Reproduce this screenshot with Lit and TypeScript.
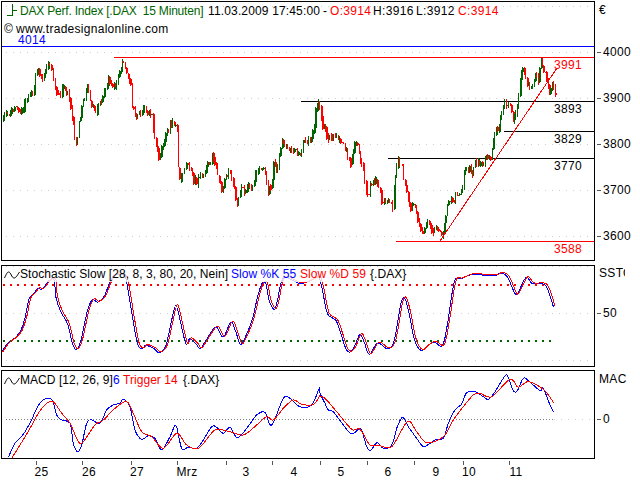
import { LitElement, html, svg, css } from "lit";
import { customElement } from "lit/decorators.js";

type P = [number, number];

// price course of the main panel (x, y in page pixels)
const PRICE: P[] = [
  [2,122],[5,112],[10,112],[15,108],[20,115],[25,102],[30,92],[33,97],[36,68],[42,78],[47,65],[52,68],[55,87],[58,98],[62,88],[68,93],[70,110],[73,125],[75,143],[77,145],[78,123],[82,107],[87,85],[90,103],[95,110],[100,103],[103,95],[108,78],[113,88],[118,78],[123,59],[127,80],[130,79],
  [131,95],[132,107],[135,117],[143,110],[152,115],[153,133],[158,157],[163,143],[167,133],[170,125],[175,123],[177,135],[178,167],[180,180],[183,167],[188,163],[193,180],[197,183],[200,173],[205,172],[208,162],[213,157],[217,173],[222,192],[223,185],[227,173],[230,172],[233,187],[237,203],[240,188],[245,193],[247,182],[252,188],[255,170],[260,168],[263,165],[267,185],[268,193],[272,179],[273,163],[277,172],[278,157],[282,140],[287,147],[295,150],[300,157],[303,137],[310,143],[313,132],[315,112],[318,101],
  [322,125],[327,137],[337,138],[345,148],[350,163],[355,145],[358,150],[363,173],[365,190],[368,195],[370,182],[375,180],[378,185],[382,203],[388,202],[392,208],[395,175],[397,160],[402,167],[405,188],[410,208],[415,205],[418,223],[422,237],[426,220],[432,230],[437,230],[442,235],[445,220],[448,198],[452,203],[457,193],[462,193],[463,173],[467,167],[472,173],[475,160],[480,167],[487,157],[490,163],[492,147],[495,130],[497,128],[502,115],[504,100],[505,107],[510,108],[513,125],[517,107],[519,87],[521,68],[525,80],[530,87],[535,77],[538,78],[540,57],[543,70],[547,82],[550,95],[552,82],[554,92],[556,93],
];

const toPage = (ox: number, oy: number, a: number[][]): P[] =>
  a.map(([x, y]) => [ox + x / 3, oy + y / 3] as P);

const STOCH: P[] = [
  ...toPage(0, 260, [[5,278],[25,250],[50,230],[65,210],[78,170],[90,115],[105,98],[115,85],[130,85],[150,60],[165,60],[170,110],[185,155],[205,190],[220,250],[232,267],[245,240],[265,150],[280,118],[295,125],[315,108],[330,70],[345,45],[375,45],[385,80],[400,170],[415,250],[428,265],[440,255],[465,265],[480,277],[500,255],[515,190],[530,135],[545,190],[560,250],[572,235],[590,250],[603,265],[620,240],[650,200],[672,230],[695,185],[710,215],[725,252],[745,215],[760,175],[775,110],[788,70],[800,70],[810,120],[825,147],[835,120],[845,70],[860,50],[905,70],[955,50]]),
  ...toPage(320, 260, [[0,50],[10,90],[25,160],[50,180],[65,220],[80,265],[92,275],[105,260],[122,222],[135,245],[150,282],[175,248],[205,265],[225,240],[245,130],[257,115],[270,160],[285,235],[305,270],[325,255],[345,245],[370,255],[385,190],[405,65],[425,55],[460,42],[500,45],[530,45],[545,38],[565,50],[585,95],[595,100],[620,52],[640,70],[670,70],[685,85],[703,140]]),
];

const MACD_BLUE: P[] = [
  ...toPage(0, 370, [[25,262],[45,220],[60,205],[75,185],[95,150],[110,115],[130,90],[155,88],[170,135],[185,150],[210,160],[220,220],[232,245],[245,225],[260,160],[275,150],[300,160],[320,120],[340,105],[360,100],[370,88],[390,110],[405,180],[425,208],[445,197],[465,205],[485,240],[510,200],[528,167],[545,235],[565,232],[590,235],[610,210],[635,170],[650,172],[670,190],[690,172],[712,203],[740,175],[770,135],[795,127],[815,165],[850,85],[870,85],[900,110],[935,105],[958,55]]),
  ...toPage(320, 370, [[0,70],[15,100],[25,120],[40,125],[70,165],[95,192],[115,178],[125,180],[140,230],[152,240],[172,218],[190,235],[215,225],[232,170],[248,142],[265,170],[290,205],[310,230],[330,220],[345,210],[370,205],[385,160],[405,120],[425,102],[440,68],[465,65],[490,80],[505,88],[525,65],[555,18],[565,22],[580,62],[592,62],[610,25],[625,32],[660,62],[670,55],[690,105],[702,127]]),
];

const MACD_RED: P[] = [
  ...toPage(0, 370, [[35,265],[60,225],[90,175],[115,130],[140,100],[160,95],[185,130],[210,160],[235,215],[250,215],[285,165],[310,150],[345,115],[380,95],[400,130],[425,185],[455,200],[490,235],[530,190],[560,225],[595,235],[630,195],[650,178],[690,185],[730,195],[770,165],[800,140],[820,150],[850,115],[880,90],[905,103],[940,103],[958,80]]),
  ...toPage(320, 370, [[0,78],[15,85],[50,125],[95,178],[120,178],[150,225],[175,225],[215,230],[262,155],[290,185],[320,218],[370,200],[400,150],[430,110],[460,75],[480,70],[515,80],[570,28],[595,52],[625,35],[672,60],[702,100]]),
];

// Catmull-Rom through the points, so the curves read as rounded and not as polygons
function smooth(a: P[], dx = 0, dy = 0): string {
  const p = a.map(([x, y]) => [x + dx, y + dy] as P);
  let d = `M${p[0][0].toFixed(1)} ${p[0][1].toFixed(1)}`;
  for (let i = 0; i < p.length - 1; i++) {
    const p0 = p[Math.max(i - 1, 0)];
    const p1 = p[i];
    const p2 = p[i + 1];
    const p3 = p[Math.min(i + 2, p.length - 1)];
    const c1x = p1[0] + (p2[0] - p0[0]) / 6;
    const c1y = p1[1] + (p2[1] - p0[1]) / 6;
    const c2x = p2[0] - (p3[0] - p1[0]) / 6;
    const c2y = p2[1] - (p3[1] - p1[1]) / 6;
    d += `C${c1x.toFixed(1)} ${c1y.toFixed(1)} ${c2x.toFixed(1)} ${c2y.toFixed(1)} ${p2[0].toFixed(1)} ${p2[1].toFixed(1)}`;
  }
  return d;
}

function priceAt(x: number): number {
  for (let i = 1; i < PRICE.length; i++) {
    const [x0, y0] = PRICE[i - 1];
    const [x1, y1] = PRICE[i];
    if (x <= x1) return y0 + ((y1 - y0) * (x - x0)) / (x1 - x0 || 1);
  }
  return PRICE[PRICE.length - 1][1];
}

interface Bar { x: number; top: number; bottom: number; up: boolean; wide: boolean }

function buildBars(): Bar[] {
  let s = 12345;
  const rnd = () => {
    s = (s * 1664525 + 1013904223) >>> 0;
    return s / 4294967296;
  };
  const out: Bar[] = [];
  let prev = priceAt(2);
  for (let x = 3; x <= 556; x += 1.4) {
    const target = priceAt(x);
    const close = target + (rnd() - 0.5) * 7;
    const wick = rnd() * 3.5;
    out.push({
      x: Math.round(x),
      top: Math.max(Math.min(prev, close) - wick, 57),
      bottom: Math.min(Math.max(prev, close) + wick, 241),
      up: close < prev,
      wide: rnd() > 0.5,
    });
    prev = close;
  }
  return out;
}

const BARS = buildBars();
const MAIN_GRID = [6, 52, 98, 144, 190, 236];
const DAY_TICKS = [36, 82, 131, 177, 226, 272, 320, 367, 414, 463, 509];
const DAYS: [string, number][] = [
  ["25", 41.5], ["26", 89], ["27", 137], ["Mrz", 187], ["3", 246], ["4", 294],
  ["5", 341], ["6", 388], ["9", 436], ["10", 469], ["11", 516],
];

@customElement("app-root")
export class AppRoot extends LitElement {
  static styles = css`
    :host {
      display: block;
      width: 640px;
      height: 480px;
      background: #fff;
      overflow: hidden;
      font-family: "Liberation Sans", Arial, sans-serif;
    }
    .page {
      display: flex;
      flex-direction: column;
      padding: 1px 0 0 1px;
      width: 640px;
      height: 480px;
      box-sizing: border-box;
    }
    .row { display: flex; }
    .main { height: 260px; margin-bottom: 4px; }
    .stoch { height: 102px; margin-bottom: 3px; }
    .macd { height: 89px; }
    .plot {
      width: 594px;
      height: 100%;
      box-sizing: border-box;
      border: 1px solid #000;
      flex: none;
    }
    svg { display: block; }
    text { font: 12px "Liberation Sans", Arial, sans-serif; fill: #000; letter-spacing: 0.33px; }
    .tight { letter-spacing: -0.2px; white-space: pre; }
    .date { letter-spacing: 0.15px; }
    .url { letter-spacing: 0.28px; }
    .legend { letter-spacing: 0.05px; }
    .green { fill: #006400; }
    .red { fill: #ff0000; }
    .blue { fill: #0000ff; }
    .grid { stroke: #cfcfcf; stroke-width: 1; stroke-dasharray: 1 6; shape-rendering: crispEdges; }
    .hl { stroke-width: 1; shape-rendering: crispEdges; }
    .s-blue { stroke: #0000ff; }
    .s-red { stroke: #ff0000; }
    .s-black { stroke: #000; }
    .s-green { stroke: #006400; }
    .bar { stroke-width: 1; shape-rendering: crispEdges; }
    .curve { fill: none; stroke-width: 1; shape-rendering: crispEdges; }
    .trend { fill: none; stroke: #ff0000; stroke-width: 1; shape-rendering: crispEdges; }
    .dots { stroke-width: 2; stroke-dasharray: 2 5; shape-rendering: crispEdges; }
    .zero { stroke: #808080; stroke-width: 1; stroke-dasharray: 1 2; shape-rendering: crispEdges; }
    .veil { fill: #fff; fill-opacity: 0.82; }
    .icon { fill: none; stroke: #000; stroke-width: 1; }
    .icon-g { fill: none; stroke: #006400; stroke-width: 1; shape-rendering: crispEdges; }
    .tick { stroke: #555; stroke-width: 1; shape-rendering: crispEdges; }
    .xaxis { margin-left: -1px; }
  `;

  private tick(y: number, label: string) {
    return svg`
      <line class="tick" x1="597" x2="601" y1=${y + 0.5} y2=${y + 0.5}></line>
      <text x="603" y=${y + 4}>${label}</text>`;
  }

  private mainPlot() {
    return svg`
      <svg width="592" height="258" viewBox="2 2 592 258">
        ${MAIN_GRID.map((y) => svg`<line class="grid" x1="6" x2="590" y1=${y + 0.5} y2=${y + 0.5}></line>`)}
        <line class="hl s-blue" x1="2" x2="594" y1="46.5" y2="46.5"></line>
        <line class="hl s-red" x1="114" x2="594" y1="57.5" y2="57.5"></line>
        <line class="hl s-black" x1="301" x2="594" y1="101.5" y2="101.5"></line>
        <line class="hl s-black" x1="504" x2="594" y1="131.5" y2="131.5"></line>
        <line class="hl s-black" x1="388" x2="594" y1="158.5" y2="158.5"></line>
        <line class="hl s-red" x1="396" x2="594" y1="241.5" y2="241.5"></line>
        ${BARS.map((b) => svg`
          <line class="bar ${b.up ? "s-green" : "s-red"}" x1=${b.x + 0.5} x2=${b.x + 0.5} y1=${b.top} y2=${b.bottom}></line>
          ${b.wide ? svg`<line class="bar ${b.up ? "s-green" : "s-red"}" x1=${b.x + 1.5} x2=${b.x + 1.5} y1=${b.top + 1} y2=${b.bottom - 1}></line>` : ""}`)}
        <line class="trend" x1="440" y1="241" x2="557" y2="68"></line>
        <path class="icon-g" d="M12.5 4V16M7 15.5H12.5M12.5 10.5H17"></path>
        <text class="green tight" x="20" y="15">DAX Perf. Index [.DAX  15 Minuten]</text>
        <text class="date" x="208" y="15">11.03.2009 17:45:00</text>
        <text x="323" y="15">-</text>
        <text class="red" x="330" y="15">O:3914</text>
        <text x="373" y="15">H:3916</text>
        <text x="416" y="15">L:3912</text>
        <text class="red" x="458" y="15">C:3914</text>
        <text x="4" y="33">©</text>
        <text class="url" x="16" y="33">www.tradesignalonline.com</text>
        <text class="blue" x="18" y="43.5">4014</text>
        <text class="red" x="554" y="69">3991</text>
        <text x="554" y="113">3893</text>
        <text x="554" y="143">3829</text>
        <text x="554" y="170">3770</text>
        <text class="red" x="554" y="253">3588</text>
      </svg>`;
  }

  private stochPlot() {
    return svg`
      <svg width="592" height="100" viewBox="2 266 592 100">
        ${[266, 313, 360].map((y) => svg`<line class="grid" x1="6" x2="590" y1=${y + 0.5} y2=${y + 0.5}></line>`)}
        <line class="dots s-red" x1="3" x2="549" y1="285" y2="285"></line>
        <line class="dots s-green" x1="3" x2="552" y1="341" y2="341"></line>
        <path class="curve s-blue" d=${smooth(STOCH, -0.8, 0.4)}></path>
        <path class="curve s-red" d=${smooth(STOCH, 0.8, -0.4)}></path>
        <rect class="veil" x="4" y="268" width="402" height="14"></rect>
        <path class="icon" d="M4.5 278C6 275 7 272 8.5 272C11 272 11.5 278 14 278C16 278 17.5 275 19.5 272"></path>
        <text class="legend" x="20" y="278">Stochastic Slow [28, 8, 3, 80, 20, Nein]</text>
        <text class="blue legend" x="231" y="278">Slow %K 55</text>
        <text class="red legend" x="300" y="278">Slow %D 59</text>
        <text class="legend" x="370" y="278">{.DAX}</text>
      </svg>`;
  }

  private macdPlot() {
    return svg`
      <svg width="592" height="87" viewBox="2 371 592 87">
        <line class="zero" x1="6" x2="554" y1="419.5" y2="419.5"></line>
        <line class="grid" x1="554" x2="590" y1="419.5" y2="419.5"></line>
        <path class="curve s-blue" d=${smooth(MACD_BLUE)}></path>
        <path class="curve s-red" d=${smooth(MACD_RED)}></path>
        <path class="icon" d="M4.5 384C6 381 7 378 8.5 378C11 378 11.5 384 14 384C16 384 17.5 381 19.5 378"></path>
        <text class="legend" x="20" y="384">MACD [12, 26, 9]</text>
        <text class="blue" x="113" y="384">6</text>
        <text class="red legend" x="123" y="384">Trigger 14</text>
        <text class="legend" x="183" y="384">{.DAX}</text>
      </svg>`;
  }

  render() {
    return html`
      <div class="page">
        <div class="row main">
          <div class="plot">${this.mainPlot()}</div>
          <svg width="45" height="260" viewBox="595 1 45 260">
            <text x="599" y="14">€</text>
            ${this.tick(52, "4000")}
            ${this.tick(98, "3900")}
            ${this.tick(144, "3800")}
            ${this.tick(190, "3700")}
            ${this.tick(236, "3600")}
          </svg>
        </div>
        <div class="row stoch">
          <div class="plot">${this.stochPlot()}</div>
          <svg width="45" height="102" viewBox="595 265 45 102">
            <svg x="596" y="266" width="29" height="16"><text x="3" y="11">SSTOCH</text></svg>
            ${this.tick(313, "50")}
          </svg>
        </div>
        <div class="row macd">
          <div class="plot">${this.macdPlot()}</div>
          <svg width="45" height="89" viewBox="595 370 45 89">
            <svg x="596" y="372" width="31" height="16"><text x="3" y="11">MACD</text></svg>
            ${this.tick(419, "0")}
          </svg>
        </div>
        <svg class="xaxis" width="640" height="21" viewBox="0 459 640 21">
          ${DAY_TICKS.map((x) => svg`<line class="tick" x1=${x + 0.5} x2=${x + 0.5} y1="461" y2="465"></line>`)}
          ${DAYS.map(([t, x]) => svg`<text x=${x} y="476" text-anchor="middle">${t}</text>`)}
        </svg>
      </div>`;
  }
}
